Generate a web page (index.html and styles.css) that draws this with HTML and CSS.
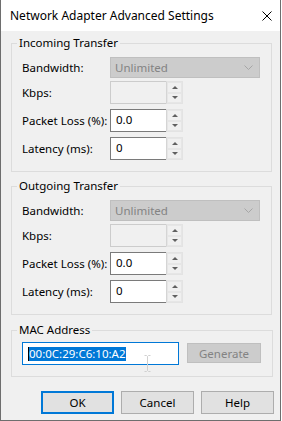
FILE: index.html
```html
<!DOCTYPE html>
<html lang="en">
  <head>
    <meta charset="UTF-8" />
    <title>Network Adapter Advanced Settings</title>
    <link rel="stylesheet" href="styles.css">
  </head>
  <body>
    <div class="window">
      <div class="titlebar">
        <span class="title">Network Adapter Advanced Settings</span>
        <svg class="close" width="10" height="10" viewBox="0 0 10 10">
          <path d="M0.5 0.5 L9.5 9.5 M9.5 0.5 L0.5 9.5" stroke="#000" stroke-width="1" fill="none"/>
        </svg>
      </div>

      <div class="content">
        <fieldset class="group">
          <legend>Incoming Transfer</legend>
          <div class="row row-select">
            <label>Bandwidth:</label>
            <div class="select disabled">
              <span>Unlimited</span>
              <svg width="9" height="5" viewBox="0 0 9 5"><path d="M0.5 0.5 L4.5 4.5 L8.5 0.5" stroke="#a6a6a6" fill="none"/></svg>
            </div>
          </div>
          <div class="row row-first">
            <label>Kbps:</label>
            <div class="spin disabled">
              <div class="field"></div>
              <div class="spin-btns"><span class="up"></span><span class="down"></span></div>
            </div>
          </div>
          <div class="row">
            <label>Packet Loss (%):</label>
            <div class="spin">
              <div class="field">0.0</div>
              <div class="spin-btns"><span class="up"></span><span class="down"></span></div>
            </div>
          </div>
          <div class="row">
            <label>Latency (ms):</label>
            <div class="spin">
              <div class="field">0</div>
              <div class="spin-btns"><span class="up"></span><span class="down"></span></div>
            </div>
          </div>
        </fieldset>

        <fieldset class="group">
          <legend>Outgoing Transfer</legend>
          <div class="row row-select">
            <label>Bandwidth:</label>
            <div class="select disabled">
              <span>Unlimited</span>
              <svg width="9" height="5" viewBox="0 0 9 5"><path d="M0.5 0.5 L4.5 4.5 L8.5 0.5" stroke="#a6a6a6" fill="none"/></svg>
            </div>
          </div>
          <div class="row row-first">
            <label>Kbps:</label>
            <div class="spin disabled">
              <div class="field"></div>
              <div class="spin-btns"><span class="up"></span><span class="down"></span></div>
            </div>
          </div>
          <div class="row">
            <label>Packet Loss (%):</label>
            <div class="spin">
              <div class="field">0.0</div>
              <div class="spin-btns"><span class="up"></span><span class="down"></span></div>
            </div>
          </div>
          <div class="row">
            <label>Latency (ms):</label>
            <div class="spin">
              <div class="field">0</div>
              <div class="spin-btns"><span class="up"></span><span class="down"></span></div>
            </div>
          </div>
        </fieldset>

        <fieldset class="group group-mac">
          <legend>MAC Address</legend>
          <div class="mac-row">
            <div class="mac-input">
              <span class="caret"></span><span class="selected">00:0C:29:C6:10:A2</span>
              <svg class="ibeam" width="7" height="17" viewBox="0 0 7 17">
                <path d="M0.5 0.5 H2.5 L3.5 1.5 L4.5 0.5 H6.5 M3.5 1.5 V15.5 M0.5 16.5 H2.5 L3.5 15.5 L4.5 16.5 H6.5" stroke="#d0d0d0" fill="none"/>
              </svg>
            </div>
            <button class="btn btn-generate" disabled>Generate</button>
          </div>
        </fieldset>

        <div class="actions">
          <button class="btn btn-default">OK</button>
          <button class="btn">Cancel</button>
          <button class="btn">Help</button>
        </div>
      </div>
    </div>
  </body>
</html>
```

FILE: styles.css
```css
* {
  margin: 0;
  padding: 0;
  box-sizing: border-box;
}

body {
  font-family: "Segoe UI", "Noto Sans", sans-serif;
  font-size: 11.5px;
  color: #000;
  background-color: #fff;
}

.window {
  width: 281px;
  height: 421px;
  border: 1px solid #6e6e6e;
  border-top: none;
  background-color: #f0f0f0;
  display: flex;
  flex-direction: column;
}

.titlebar {
  height: 31px;
  background-color: #fff;
  display: flex;
  align-items: center;
  justify-content: space-between;
  padding: 0 8px 0 9px;
}

.title {
  font-size: 12px;
}

.close {
  display: block;
}

.content {
  display: flex;
  flex-direction: column;
}

.group {
  border: 1px solid #dcdcdc;
  margin: 6px 8px 0 10px;
  padding: 6px 11px 11px 10px;
}

.group:first-child {
  margin-top: 4px;
}

.group legend {
  line-height: 16px;
  padding: 0 2px;
  margin-left: -5px;
}

.row {
  display: flex;
  align-items: center;
  margin-top: 5px;
}

.row-select {
  margin-top: 0;
}

.row-first {
  margin-top: 3px;
}

.row label {
  width: 88px;
}

.select {
  width: 150px;
  height: 21px;
  display: flex;
  align-items: center;
  justify-content: space-between;
  padding: 0 6px 0 4px;
  border: 1px solid #bfbfbf;
  background-color: #ccc;
}

.select.disabled {
  color: #838383;
}

.spin {
  display: flex;
  height: 23px;
}

.spin .field {
  width: 56px;
  border: 1px solid #7a7a7a;
  border-right: none;
  background-color: #fff;
  padding: 2px 5px;
  line-height: 16px;
}

.spin.disabled .field {
  border-color: #ccc;
  background-color: #f0f0f0;
}

.spin-btns {
  width: 17px;
  display: flex;
  flex-direction: column;
  border: 1px solid #e3e3e3;
  border-left-color: #d5d5d5;
}

.spin-btns span {
  flex: 1;
  display: flex;
  align-items: center;
  justify-content: center;
  background-color: #f0f0f0;
  border: 1px solid #e6e6e6;
}

.spin-btns .up::after {
  content: "";
  border-left: 3px solid transparent;
  border-right: 3px solid transparent;
  border-bottom: 3px solid #606060;
}

.spin-btns .down::after {
  content: "";
  border-left: 3px solid transparent;
  border-right: 3px solid transparent;
  border-top: 3px solid #606060;
}

.group-mac {
  margin-top: 7px;
  padding-top: 4px;
}

.mac-row {
  display: flex;
  align-items: flex-start;
  gap: 8px;
}

.mac-input {
  position: relative;
  width: 157px;
  height: 23px;
  border: 1px solid #0078d7;
  background-color: #fff;
  padding: 3px 5px;
  display: flex;
  align-items: center;
}

.mac-input .caret {
  width: 1px;
  height: 14px;
  background-color: #000;
}

.mac-input .selected {
  background-color: #0078d7;
  color: #fff;
  line-height: 14px;
}

.ibeam {
  position: absolute;
  left: 121px;
  top: 12px;
}

.btn {
  font-family: inherit;
  font-size: 11.5px;
  color: #000;
  height: 23px;
  width: 73px;
  border: 1px solid #adadad;
  background-color: #e1e1e1;
}

.btn-default {
  border: 2px solid #0078d7;
}

.btn-generate {
  width: 74px;
  height: 20px;
  margin-top: 1px;
  border-color: #bfbfbf;
  background-color: #ccc;
  color: #838383;
}

.actions {
  display: flex;
  justify-content: flex-end;
  gap: 7px;
  margin: 14px 6px 0 0;
}
```
